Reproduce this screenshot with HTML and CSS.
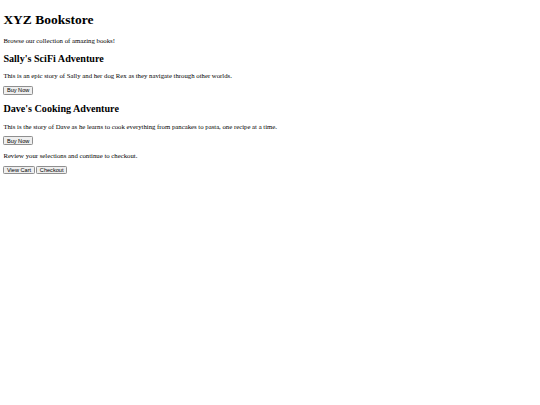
FILE: index.html
```html
<!DOCTYPE html>
<html>
<head>
<meta charset="utf-8">
<title>XYZ Bookstore</title>
<link rel="stylesheet" href="styles.css">
</head>
<body class="page">
<h1 class="title">XYZ Bookstore</h1>
<p class="text">Browse our collection of amazing books!</p>
<h2 class="book-title">Sally's SciFi Adventure</h2>
<p class="text">This is an epic story of Sally and her dog Rex as they navigate through other worlds.</p>
<button class="btn">Buy Now</button>
<h2 class="book-title">Dave's Cooking Adventure</h2>
<p class="text">This is the story of Dave as he learns to cook everything from pancakes to pasta, one recipe at a time.</p>
<button class="btn">Buy Now</button>
<p class="text">Review your selections and continue to checkout.</p>
<button class="btn">View Cart</button>
<button class="btn">Checkout</button>
</body>
</html>
```
FILE: styles.css
```css
html, body {
  background: #ffffff;
}
.page {
  margin: 3.375px;
  font-family: "Liberation Serif", "Times New Roman", serif;
  font-size: 6.75px;
  color: #000;
}
.title {
  font-size: 13.5px;
  font-weight: bold;
  margin: 9.045px 0;
}
.book-title {
  font-size: 10.125px;
  font-weight: bold;
  margin: 8.404px 0;
}
.text {
  font-size: 6.75px;
  margin: 6.75px 0;
}
.btn {
  font-family: "Liberation Sans", Arial, sans-serif;
  font-size: 5.625px;
  padding: 0.42px 2.53px;
  margin: 0;
  background: #efefef;
  border: 1px solid #8f8f8f;
  border-radius: 1.3px;
  color: #000;
  line-height: normal;
}
```
